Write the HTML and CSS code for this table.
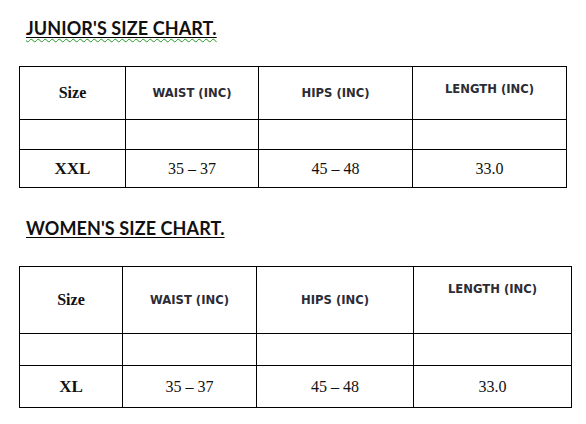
FILE: index.html
```html
<!DOCTYPE html>
<html>
<head>
<meta charset="utf-8">
<link rel="stylesheet" href="styles.css">
</head>
<body>
<div class="page">
  <h2 class="title junior"><span class="ul"><span class="spell">JUNIOR'S SIZE CHART.</span></span></h2>
  <table class="chart chart-junior">
    <colgroup>
      <col style="width:106px"><col style="width:133px"><col style="width:154px"><col style="width:154px">
    </colgroup>
    <tr class="head">
      <td class="size-h">Size</td>
      <td class="hdr">WAIST (INC)</td>
      <td class="hdr">HIPS (INC)</td>
      <td class="hdr top">LENGTH (INC)</td>
    </tr>
    <tr class="empty"><td></td><td></td><td></td><td></td></tr>
    <tr class="data">
      <td class="size-v">XXL</td>
      <td class="num">35 – 37</td>
      <td class="num">45 – 48</td>
      <td class="num">33.0</td>
    </tr>
  </table>

  <h2 class="title women"><span class="ul">WOMEN'S SIZE CHART.</span></h2>
  <table class="chart chart-women">
    <colgroup>
      <col style="width:103px"><col style="width:134px"><col style="width:157px"><col style="width:158px">
    </colgroup>
    <tr class="head">
      <td class="size-h">Size</td>
      <td class="hdr">WAIST (INC)</td>
      <td class="hdr">HIPS (INC)</td>
      <td class="hdr top">LENGTH (INC)</td>
    </tr>
    <tr class="empty"><td></td><td></td><td></td><td></td></tr>
    <tr class="data">
      <td class="size-v">XL</td>
      <td class="num">35 – 37</td>
      <td class="num">45 – 48</td>
      <td class="num">33.0</td>
    </tr>
  </table>
</div>
</body>
</html>
```

FILE: styles.css
```css
html, body {
  margin: 0;
  padding: 0;
  background: #ffffff;
}

.page {
  padding: 17px 0 0 19px;
}

.title {
  margin: 0 0 0 7px;
  font-family: Lato, "Open Sans", sans-serif;
  font-weight: 700;
  font-size: 18px;
  line-height: 22px;
  color: #111;
  letter-spacing: 0.1px;
}

.ul {
  text-decoration: underline;
  text-decoration-color: #000;
  text-decoration-thickness: 1px;
  text-underline-offset: 2px;
}

.spell {
  text-decoration: underline wavy #1f9a1f;
  text-decoration-thickness: 1px;
  text-underline-offset: 3px;
}

.junior {
  margin-bottom: 27px;
}

.women {
  margin-top: 29px;
  margin-bottom: 27px;
}

.chart {
  border-collapse: collapse;
  table-layout: fixed;
}

.chart td {
  border: 1px solid #000;
  padding: 0;
  text-align: center;
  vertical-align: middle;
}

.chart-junior .head { height: 53px; }
.chart-junior .empty { height: 30px; }
.chart-junior .data { height: 38px; }

.chart-women .head { height: 67px; }
.chart-women .empty { height: 32px; }
.chart-women .data { height: 42px; }

.size-h, .size-v {
  font-family: "Liberation Serif", serif;
  font-weight: 700;
  font-size: 16px;
  color: #111;
}

.size-v {
  font-size: 17px;
}

.hdr {
  font-family: "DejaVu Sans", Tahoma, sans-serif;
  font-weight: 700;
  font-size: 11.6px;
  color: #2c2c36;
}

.chart td.top {
  vertical-align: top;
  padding-top: 15px;
}

.num {
  font-family: "Liberation Serif", serif;
  font-size: 16px;
  color: #111;
}
```
